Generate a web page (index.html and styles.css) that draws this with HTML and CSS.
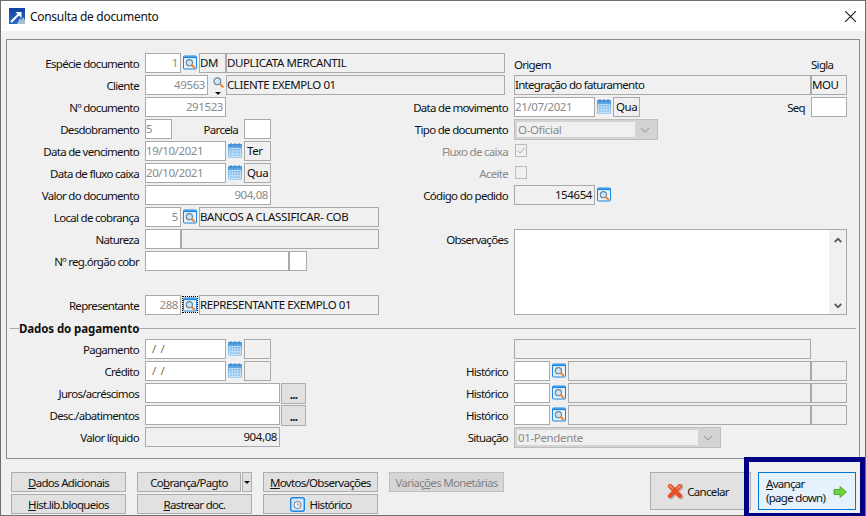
FILE: index.html
```html
<!DOCTYPE html>
<html lang="pt-BR">
<head>
<meta charset="utf-8">
<title>Consulta de documento</title>
<link rel="stylesheet" href="styles.css">
</head>
<body>
<svg class="defs" width="0" height="0" aria-hidden="true">
  <defs>
    <linearGradient id="gCal" x1="0" y1="0" x2="0" y2="1"><stop offset="0" stop-color="#3f93dc"/><stop offset=".35" stop-color="#6fb0e6"/><stop offset="1" stop-color="#a9d0ee"/></linearGradient>
    <linearGradient id="gLogo" x1="0" y1="0" x2="0" y2="1"><stop offset="0" stop-color="#133f9e"/><stop offset="1" stop-color="#2a6cc8"/></linearGradient>
    <symbol id="lens" viewBox="0 0 14 14">
      <circle cx="6.200" cy="6.200" r="4" fill="#cfe3f2" stroke="#5f87a5" stroke-width="1.300"/>
      <path d="M4.200 5.600a2.400 2.400 0 0 1 2-1.600" fill="none" stroke="#fff" stroke-width="1"/>
      <path d="M9.500 9.500l3 3" stroke="#e8853a" stroke-width="2.400" stroke-linecap="round"/>
    </symbol>
    <symbol id="lookup" viewBox="0 0 14 14">
      <rect x=".5" y=".5" width="13" height="13" rx="1" fill="#e8f1f8" stroke="#1a86e0"/>
      <rect x="1" y="1" width="12" height="1.600" fill="#1a86e0"/>
      <circle cx="6.400" cy="7.200" r="3.100" fill="#cfe3f2" stroke="#5f87a5" stroke-width="1.100"/>
      <path d="M8.700 9.400l2.700 2.500" stroke="#e8853a" stroke-width="2" stroke-linecap="round"/>
    </symbol>
    <symbol id="cal" viewBox="0 0 14 15">
      <rect x="0" y="1" width="14" height="14" rx="1" fill="url(#gCal)"/>
      <path d="M3 0v3M7 0v3M11 0v3" stroke="#3c82c4" stroke-width="1"/>
      <path d="M1.500 5.500h11v8h-11zM1.500 8h11M1.500 10.700h11M4.300 5.500v8M7 5.500v8M9.700 5.500v8" fill="none" stroke="#d8ebfa" stroke-width=".7"/>
    </symbol>
  </defs>
</svg>
<div class="window">
  <header class="titlebar">
    <svg class="logo" viewBox="0 0 16 16" aria-hidden="true">
      <rect width="16" height="16" fill="url(#gLogo)"/>
      <path d="M8 16l3-6 1.500 2 1.500-3 2 3v4z" fill="#a9bcd8"/>
      <path d="M2 14L10 6" fill="none" stroke="#fff" stroke-width="2"/>
      <path d="M6.500 4h6v6z" fill="#fff"/>
    </svg>
    <span class="title">Consulta de documento</span>
    <svg class="close" viewBox="0 0 10 10" aria-hidden="true"><path d="M0 0l10 10M10 0L0 10" stroke="#1a1a1a" stroke-width="1"/></svg>
  </header>

  <main class="panel">
    <section class="columns upper">
      <div class="col col-left">
        <div class="row"><label class="lbl">Espécie documento</label><span class="f w36 off num">1</span><svg class="ico"><use href="#lookup"/></svg><span class="f ro w27">DM</span><span class="f ro w279">DUPLICATA MERCANTIL</span></div>
        <div class="row"><label class="lbl">Cliente</label><span class="f w63 off num">49563</span><span class="cli"><svg class="lens"><use href="#lens"/></svg><i class="caret"></i></span><span class="f ro w279">CLIENTE EXEMPLO 01</span></div>
        <div class="row"><label class="lbl">Nº documento</label><span class="f w81 off num">291523</span></div>
        <div class="row"><label class="lbl">Desdobramento</label><span class="f w27 off">5</span><label class="lbl-parcela">Parcela</label><span class="f w27"></span></div>
        <div class="row"><label class="lbl">Data de vencimento</label><span class="f w81 off">19/10/2021</span><svg class="ico"><use href="#cal"/></svg><span class="f ro w27 day">Ter</span></div>
        <div class="row"><label class="lbl">Data de fluxo caixa</label><span class="f w81 off">20/10/2021</span><svg class="ico"><use href="#cal"/></svg><span class="f ro w27 day">Qua</span></div>
        <div class="row"><label class="lbl">Valor do documento</label><span class="f w126 off num">904,08</span></div>
        <div class="row"><label class="lbl">Local de cobrança</label><span class="f w36 off num">5</span><svg class="ico"><use href="#lookup"/></svg><span class="f ro w180">BANCOS A CLASSIFICAR- COB</span></div>
        <div class="row"><label class="lbl">Natureza</label><span class="f w36"></span><span class="f ro w198"></span></div>
        <div class="row"><label class="lbl">Nº reg.órgão cobr</label><span class="f w144"></span><span class="f w18"></span></div>
        <div class="row"></div>
        <div class="row"><label class="lbl">Representante</label><span class="f w36 off num">288</span><svg class="ico focus"><use href="#lookup"/></svg><span class="f ro w180">REPRESENTANTE EXEMPLO 01</span></div>
      </div>
      <div class="col col-right">
        <div class="row"><span class="lbl-r"></span><span class="cap w297">Origem</span><span class="cap">Sigla</span></div>
        <div class="row"><span class="lbl-r"></span><span class="f ro w297 mixed">Integração do faturamento</span><span class="f ro w36">MOU</span></div>
        <div class="row"><label class="lbl-r">Data de movimento</label><span class="f w81 off">21/07/2021</span><svg class="ico"><use href="#cal"/></svg><span class="f ro w27 day">Qua</span><label class="lbl-seq">Seq</label><span class="f w36"></span></div>
        <div class="row"><label class="lbl-r">Tipo de documento</label><span class="combo w144"><span class="combo-v">O-Oficial</span><svg class="chev" viewBox="0 0 10 6"><path d="M1 1l4 4 4-4" fill="none" stroke="#a5a5a5" stroke-width="1.200"/></svg></span></div>
        <div class="row"><label class="lbl-r dim">Fluxo de caixa</label><span class="check"><svg viewBox="0 0 12 12"><path d="M2 6l3 3 5-6" fill="none" stroke="#a8a8a8" stroke-width="1.200"/></svg></span></div>
        <div class="row"><label class="lbl-r dim">Aceite</label><span class="check"></span></div>
        <div class="row"><label class="lbl-r">Código do pedido</label><span class="f ro w81 num">154654</span><svg class="ico"><use href="#lookup"/></svg></div>
        <div class="row"></div>
        <div class="row row-obs"><label class="lbl-r">Observações</label>
          <div class="memo"><div class="scroll"><svg viewBox="0 0 8 6"><path d="M.8 5l3.200-3.300L7.200 5" fill="none" stroke="#555" stroke-width="1.800"/></svg><svg viewBox="0 0 8 6"><path d="M.8 1l3.200 3.300L7.200 1" fill="none" stroke="#555" stroke-width="1.800"/></svg></div></div>
        </div>
      </div>
    </section>

    <div class="legend"><span>Dados do pagamento</span></div>

    <section class="columns lower">
      <div class="col col-left">
        <div class="row"><label class="lbl">Pagamento</label><span class="f w81 slash">/ /</span><svg class="ico"><use href="#cal"/></svg><span class="f ro w27"></span></div>
        <div class="row"><label class="lbl">Crédito</label><span class="f w81 slash">/ /</span><svg class="ico"><use href="#cal"/></svg><span class="f ro w27"></span></div>
        <div class="row"><label class="lbl">Juros/acréscimos</label><span class="f w135"></span><button class="btn dots" type="button">...</button></div>
        <div class="row"><label class="lbl">Desc./abatimentos</label><span class="f w135"></span><button class="btn dots" type="button">...</button></div>
        <div class="row"><label class="lbl">Valor líquido</label><span class="f ro w135 num">904,08</span></div>
      </div>
      <div class="col col-right">
        <div class="row"><span class="lbl-r"></span><span class="f ro w297"></span></div>
        <div class="row"><label class="lbl-r">Histórico</label><span class="f w36"></span><svg class="ico"><use href="#lookup"/></svg><span class="f ro w243"></span><span class="f ro w36"></span></div>
        <div class="row"><label class="lbl-r">Histórico</label><span class="f w36"></span><svg class="ico"><use href="#lookup"/></svg><span class="f ro w243"></span><span class="f ro w36"></span></div>
        <div class="row"><label class="lbl-r">Histórico</label><span class="f w36"></span><svg class="ico"><use href="#lookup"/></svg><span class="f ro w243"></span><span class="f ro w36"></span></div>
        <div class="row"><label class="lbl-r">Situação</label><span class="combo w207"><span class="combo-v">01-Pendente</span><svg class="chev" viewBox="0 0 10 6"><path d="M1 1l4 4 4-4" fill="none" stroke="#a5a5a5" stroke-width="1.200"/></svg></span></div>
      </div>
    </section>
  </main>

  <footer class="actions">
    <div class="grid-btns">
      <button class="btn" type="button"><u>D</u>ados Adicionais</button>
      <div class="split"><button class="btn grow" type="button">Co<u>b</u>rança/Pagto</button><button class="btn drop" type="button"><i class="caret"></i></button></div>
      <button class="btn" type="button"><u>M</u>ovtos/Observações</button>
      <button class="btn disabled" type="button">Variaç<u>õ</u>es Monetárias</button>
      <button class="btn" type="button"><u>H</u>ist.lib.bloqueios</button>
      <button class="btn" type="button"><u>R</u>astrear doc.</button>
      <button class="btn" type="button"><svg class="clock" viewBox="0 0 15 15"><rect x=".7" y=".7" width="13.600" height="13.600" rx="2" fill="#d6e8f7" stroke="#1a86e0" stroke-width="1.400"/><circle cx="7.500" cy="8" r="3.600" fill="#eef4f9" stroke="#6a7f93"/><path d="M7.500 6v2h1.800" fill="none" stroke="#6a7f93" stroke-width=".8"/></svg>Histórico</button>
    </div>
    <button class="btn cancel" type="button"><svg class="xicon" viewBox="0 0 17 17"><path d="M4 4l10 10M14 4L4 14" stroke="#b9b2ab" stroke-width="4.600" stroke-linecap="round"/><path d="M3 3l10 10M13 3L3 13" stroke="#e8502a" stroke-width="4.400" stroke-linecap="round"/><path d="M2.500 2.500l3 3M13.500 2.500l-3 3" stroke="#f59a76" stroke-width="1.200" stroke-linecap="round"/></svg>Cancelar</button>
    <button class="btn next" type="button"><span><u>A</u>vançar<br>(page down)</span><svg class="arrow" viewBox="0 0 14 12"><path d="M1 3.500h6V.5L13.500 6 7 11.500v-3H1z" fill="#6fd23c" stroke="#4d9a2a" stroke-width=".8"/></svg></button>
  </footer>
  <div class="highlight"></div>
</div>
</body>
</html>
```
FILE: styles.css
```css
* { box-sizing: border-box; }
html, body { margin: 0; padding: 0; }
body { width: 866px; height: 516px; overflow: hidden; background: #4a4a4a; font-family: "Noto Sans", sans-serif; font-size: 11.500px; color: #111; letter-spacing: -.7px; }
.defs { position: absolute; }
.window { position: relative; width: 866px; height: 516px; border: 1px solid #6e6e6e; background: #f0f0f0; display: flex; flex-direction: column; }

.titlebar { height: 30px; background: #fff; display: flex; align-items: center; padding: 0 9px 0 8px; flex: none; }
.logo { width: 16px; height: 16px; margin-right: 5px; }
.title { font-size: 12px; flex: 1; letter-spacing: -.3px; }
.close { width: 11px; height: 11px; }

.panel { margin: 8px 5px 0 5px; height: 420px; border: 1px solid #8c8c8c; flex: none; }
.columns { display: flex; }
.upper { padding-top: 13px; }
.col { display: flex; flex-direction: column; gap: 2px; }
.col-left { width: 378px; }
.col-right { width: 462px; }
.row { display: flex; height: 20px; align-items: stretch; flex: none; }
.row-obs { height: 86px; }

.lbl, .lbl-r { display: block; flex: none; text-align: right; padding-top: 3px; margin-right: 6px; line-height: 15px; }
.lbl { width: 132px; }
.lbl-r { width: 123px; }
.dim { color: #8a8a8a; }
.lbl-parcela { width: 72px; flex: none; text-align: right; padding: 3px 6px 0 0; line-height: 15px; }
.lbl-seq { margin-left: auto; margin-right: 6px; padding-top: 3px; line-height: 15px; }
.cap { padding-top: 4px; line-height: 15px; }

.f { display: block; flex: none; border: 1px solid #a9a9a9; background: #fff; padding: 0; line-height: 17px; white-space: nowrap; overflow: hidden; color: #111; letter-spacing: -.4px; }
.ro { background: #f0f0f0; }
.mixed { letter-spacing: -.7px; }
.day { padding-left: 2px; }
.off { color: #8a8a8a; }
.num { text-align: right; padding-right: 2px; }
.slash { color: #8a6a50; padding-left: 6px; word-spacing: 2px; }

.w18 { width: 18px; } .w27 { width: 27px; } .w36 { width: 36px; } .w63 { width: 63px; } .w81 { width: 81px; }
.w126 { width: 126px; } .w135 { width: 135px; } .w144 { width: 144px; } .w180 { width: 180px; } .w198 { width: 198px; } .w207 { width: 207px; } .w243 { width: 243px; } .w279 { width: 279px; } .w297 { width: 297px; }

.ico { width: 14px; height: 15px; margin: 2px 2px 0; flex: none; }
.focus { outline: 1px dotted #000; }
.cli { width: 18px; flex: none; display: flex; flex-direction: column; align-items: center; padding-left: 2px; }
.lens { width: 12px; height: 12px; margin-top: 1px; }
.caret { display: block; width: 0; height: 0; border: 3px solid transparent; border-top: 3px solid #111; border-bottom: 0; }
.cli .caret { margin-top: 4px; }

.combo { display: flex; flex: none; align-items: center; background: #d4d4d4; border: 1px solid #bdbdbd; padding: 2px; height: 21px; }
.combo-v { flex: 1; height: 100%; background: #f0f0f0; color: #8a8a8a; padding-left: 1px; line-height: 15px; letter-spacing: -.35px; }
.chev { width: 10px; height: 6px; margin: 0 5px; }
.check { width: 12px; height: 13px; margin: 3px 0 0 1px; border: 1px solid #bcbcbc; background: #f0f0f0; flex: none; }
.check svg { display: block; width: 10px; height: 11px; }

.memo { width: 333px; flex: none; border: 1px solid #a9a9a9; background: #fff; display: flex; justify-content: flex-end; }
.scroll { width: 17px; background: #f0f0f0; display: flex; flex-direction: column; justify-content: space-between; align-items: center; padding: 7px 0 5px; }
.scroll svg { width: 8px; height: 6px; }

.legend { display: flex; align-items: center; margin: 6px 3px 0 3px; height: 15px; font-weight: 700; font-size: 11.500px; color: #111; letter-spacing: -.1px; }
.legend::before { content: ""; width: 9px; height: 1px; background: #a9a9a9; }
.legend::after { content: ""; flex: 1; height: 1px; background: #a9a9a9; }
.lower { padding-top: 3px; }

.actions { display: flex; align-items: flex-start; padding: 13px 0 0 10px; }
.grid-btns { display: grid; grid-template-columns: 115px 115px 115px 115px; grid-auto-rows: 20px; column-gap: 11px; row-gap: 2px; width: 494px; }
.btn { font: inherit; letter-spacing: inherit; color: #111; background: #e1e1e1; border: 1px solid #adadad; padding: 0; display: flex; align-items: center; justify-content: center; }
.btn u { text-underline-offset: 1px; }
.split { display: flex; gap: 1px; }
.grow { flex: 1; }
.drop { width: 10px; flex: none; }
.disabled { background: #d6d6d6; border-color: #bfbfbf; color: #838383; }
.clock { width: 15px; height: 15px; margin-right: 5px; }
.dots { width: 25px; height: 21px; margin-left: 1px; flex: none; font-weight: 700; align-items: flex-end; line-height: 14px; padding-bottom: 1px; }
.cancel { width: 101px; height: 38px; margin-left: 145px; flex: none; padding-right: 5px; }
.xicon { width: 17px; height: 17px; margin-right: 3px; }
.next { width: 98px; height: 38px; margin-left: 7px; flex: none; background: #e5f1fb; border-color: #0078d7; justify-content: space-between; padding: 0 8px 0 7px; text-align: left; line-height: 14px; }
.arrow { width: 14px; height: 12px; margin-top: 2px; }
.highlight { position: absolute; left: 743px; top: 456px; width: 121px; height: 59px; border: 5px solid #000080; border-bottom-width: 3px; pointer-events: none; }
```
